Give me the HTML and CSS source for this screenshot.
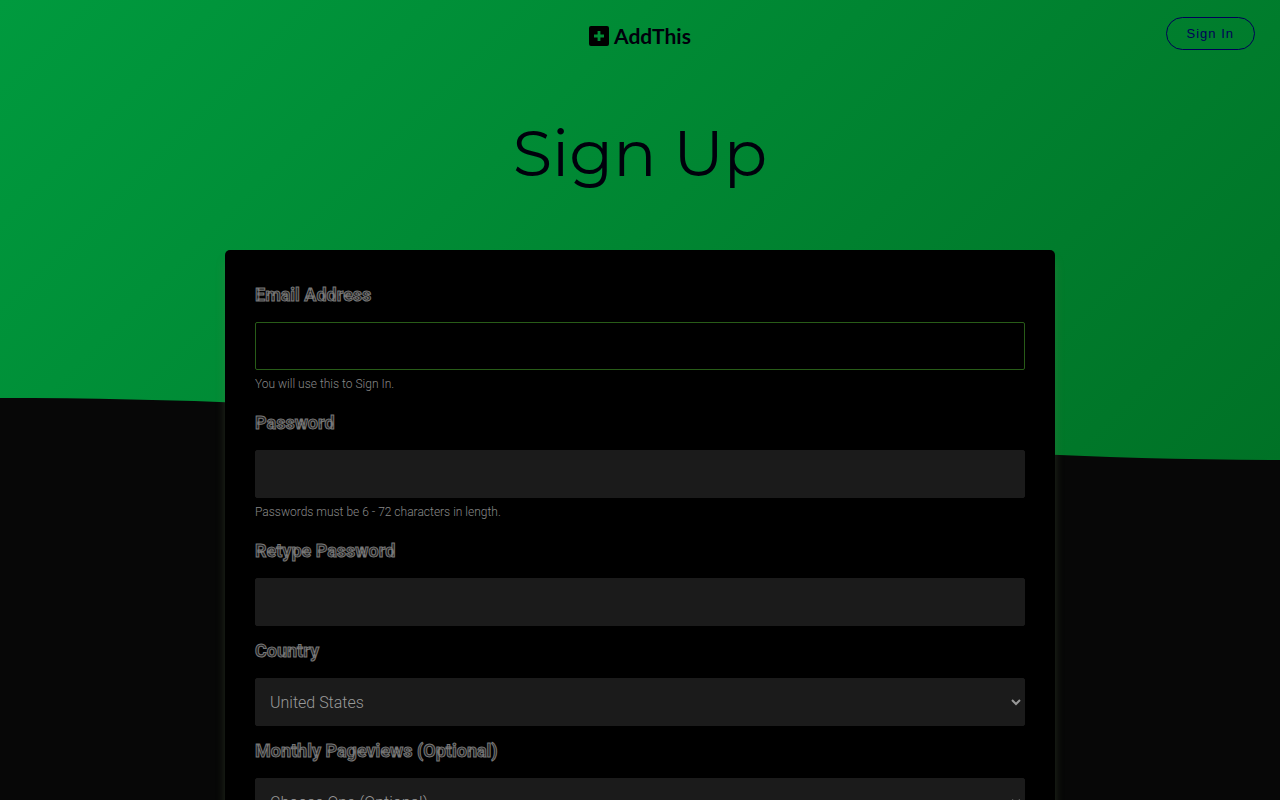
FILE: index.html
```html
<!DOCTYPE html>
<html lang="en">
  <head>
    <meta charset="utf-8" />
    <meta name="viewport" content="width=device-width, initial-scale=1" />
    <title>Sign Up - AddThis</title>
    <link rel="stylesheet" href="styles.css" />
  </head>
  <body>
    <svg class="wave" viewBox="0 0 1280 460" preserveAspectRatio="none" aria-hidden="true">
      <defs>
        <linearGradient id="green" gradientUnits="userSpaceOnUse" x1="205" y1="-205" x2="1075" y2="665">
          <stop offset="0" stop-color="#009a3e" />
          <stop offset="1" stop-color="#007226" />
        </linearGradient>
      </defs>
      <path fill="url(#green)" d="M0 0H1280V460C840 460 500 398 0 398Z" />
    </svg>
    <header class="header">
      <a class="logo" href="#">
        <svg class="logo-mark" viewBox="0 0 20 20" aria-hidden="true">
          <path fill-rule="evenodd" d="M2 0H18Q20 0 20 2V18Q20 20 18 20H2Q0 20 0 18V2Q0 0 2 0ZM8.6 5V8.6H5V11.4H8.6V15H11.4V11.4H15V8.6H11.4V5Z" />
        </svg>
        <span>AddThis</span>
      </a>
      <a class="sign-in" href="#">Sign In</a>
    </header>
    <main>
      <h1 class="title">Sign Up</h1>
      <form class="card">
        <div class="field">
          <label for="email">Email Address</label>
          <input type="email" id="email" class="active" />
          <p class="help">You will use this to Sign In.</p>
        </div>
        <div class="field">
          <label for="password">Password</label>
          <input type="password" id="password" />
          <p class="help">Passwords must be 6 - 72 characters in length.</p>
        </div>
        <div class="field">
          <label for="retype">Retype Password</label>
          <input type="password" id="retype" />
        </div>
        <div class="field">
          <label for="country">Country</label>
          <select id="country">
            <option>United States</option>
          </select>
        </div>
        <div class="field">
          <label for="pageviews">Monthly Pageviews (Optional)</label>
          <select id="pageviews">
            <option>Choose One (Optional)</option>
          </select>
        </div>
      </form>
    </main>
  </body>
</html>
```
FILE: styles.css
```css
* {
  box-sizing: border-box;
}
html {
  scrollbar-width: none;
}
body {
  margin: 0;
  position: relative;
  background: #070707;
  color: #888;
  font-family: Roboto, "Liberation Sans", sans-serif;
  font-weight: 300;
}
.wave {
  position: absolute;
  top: 0;
  left: 0;
  z-index: -1;
  width: 100%;
  height: 460px;
}

/* header */
.header {
  display: grid;
  grid-template-columns: 1fr auto 1fr;
  align-items: center;
  height: 67px;
  padding: 0 25px;
}
.logo {
  grid-column: 2;
  display: flex;
  align-items: center;
  gap: 5px;
  padding-top: 5px;
  color: #00000c;
  font: 700 21px/24px Lato, sans-serif;
  text-decoration: none;
}
.logo-mark {
  width: 20px;
  height: 20px;
}
.sign-in {
  justify-self: end;
  padding: 0 20px;
  border: 1px solid #000058;
  border-radius: 17px;
  color: #000058;
  font: 13px/31px "Liberation Sans", Arial, sans-serif;
  letter-spacing: 1px;
  text-decoration: none;
}

.title {
  margin: 0;
  padding: 46px 20px 57px;
  color: #00000c;
  font: 400 64px/80px Montserrat, Inter, sans-serif;
  text-align: center;
}

/* form */
.card {
  width: calc(100% - 40px);
  max-width: 830px;
  margin: 0 auto;
  padding: 20px 30px 40px;
  border-radius: 5px;
  background: #000;
  box-shadow: 0 10px 10px rgba(100, 130, 80, 0.3);
}
.field {
  padding-top: 13px;
}
label {
  display: block;
  margin-bottom: 15px;
  color: #222;
  font-size: 18px;
  font-weight: 700;
  line-height: 24px;
  -webkit-text-stroke: 1px #777;
}
input,
select {
  display: block;
  width: 100%;
  height: 48px;
  padding: 0 15px;
  border: 1px solid #1b1b1b;
  border-radius: 2px;
  outline: none;
  background: #1b1b1b;
  color: #999;
  font: inherit;
  font-size: 16px;
}
select {
  padding: 0 10px;
  color-scheme: dark;
}
.active {
  border-color: #285c18;
  background: #000;
}
.help {
  margin: 0;
  color: #888;
  font-size: 12px;
  line-height: 28px;
}
```
